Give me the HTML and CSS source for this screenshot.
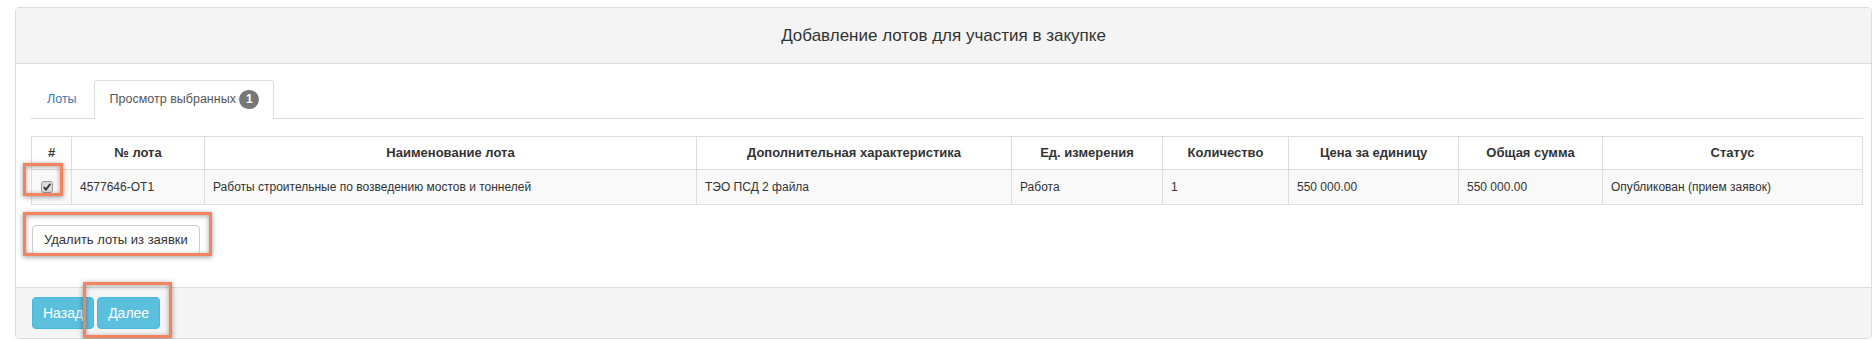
FILE: index.html
```html
<!DOCTYPE html>
<html>
<head>
  <meta charset="utf-8">
  <title>Добавление лотов</title>
  <link rel="stylesheet" href="styles.css">
</head>
<body>

<div class="page">

    <div class="panel">
        <div class="panel-heading">Добавление лотов для участия в закупке</div>

        <div class="panel-body">
            <ul class="tabs">
                <li><a href="#">Лоты</a></li>
                <li class="active"><a href="#">Просмотр выбранных <span class="badge">1</span></a></li>
            </ul>

            <div class="tab-content">
                <table class="lots">
                    <colgroup>
                        <col class="c-check">
                        <col class="c-num">
                        <col class="c-name">
                        <col class="c-extra">
                        <col class="c-unit">
                        <col class="c-qty">
                        <col class="c-price">
                        <col class="c-sum">
                        <col>
                    </colgroup>
                    <thead>
                        <tr>
                            <th>#</th>
                            <th>№ лота</th>
                            <th>Наименование лота</th>
                            <th>Дополнительная характеристика</th>
                            <th>Ед. измерения</th>
                            <th>Количество</th>
                            <th>Цена за единицу</th>
                            <th>Общая сумма</th>
                            <th>Статус</th>
                        </tr>
                    </thead>
                    <tbody>
                        <tr>
                            <td>
                                <svg class="check" width="12" height="12" viewBox="0 0 12 12">
                                    <rect x="0.5" y="0.5" width="11" height="11" rx="2" fill="#dcdcdc" stroke="#9a9a9a"/>
                                    <path d="M2.8 6.2 L4.9 8.6 L9.4 2.8" fill="none" stroke="#333" stroke-width="1.8"/>
                                </svg>
                            </td>
                            <td>4577646-ОТ1</td>
                            <td>Работы строительные по возведению мостов и тоннелей</td>
                            <td>ТЭО ПСД 2 файла</td>
                            <td>Работа</td>
                            <td>1</td>
                            <td>550 000.00</td>
                            <td>550 000.00</td>
                            <td>Опубликован (прием заявок)</td>
                        </tr>
                    </tbody>
                </table>

                <button class="btn btn-default btn-remove">Удалить лоты из заявки</button>
            </div>
        </div>

        <div class="panel-footer">
            <button class="btn btn-info">Назад</button><button class="btn btn-info">Далее</button>
        </div>
    </div>

    <!-- annotation frames -->
    <div class="mark mark-check"></div>
    <div class="mark mark-remove"></div>
    <div class="mark mark-next"></div>

</div>

</body>
</html>
```

FILE: styles.css
```css
body {
    margin: 0;
    background: #fff;
    color: #333;
    font-family: "Liberation Sans", Arial, sans-serif;
    font-size: 13px;
}

.page {
    position: relative;
    padding: 7px 1px 0 15px;
}

.panel {
    border: 1px solid #ddd;
    border-radius: 4px;
}

.panel-heading {
    height: 55px;
    line-height: 55px;
    background: #f4f4f4;
    border-bottom: 1px solid #ddd;
    border-radius: 3px 3px 0 0;
    text-align: center;
    font-size: 17px;
}

.panel-body {
    padding: 16px 8px 32px 15px;
}

.tabs {
    display: flex;
    margin: 0;
    padding: 0;
    list-style: none;
    border-bottom: 1px solid #ddd;
}

.tabs li {
    margin: 0 2px -1px 0;
}

.tabs a {
    display: block;
    padding: 9px 14px 9px 15px;
    line-height: 18px;
    font-size: 12.5px;
    color: #337ab7;
    text-decoration: none;
    border: 1px solid transparent;
    border-radius: 4px 4px 0 0;
}

.tabs .active a {
    color: #555;
    background: #fff;
    border-color: #ddd #ddd transparent;
}

.badge {
    display: inline-block;
    min-width: 8px;
    padding: 3px 6px;
    border-radius: 10px;
    background: #777;
    color: #fff;
    font-size: 12px;
    font-weight: bold;
    line-height: 13px;
    text-align: center;
    vertical-align: 0;
}

.tab-content {
    padding-top: 17px;
}

.lots {
    width: 1832px;
    table-layout: fixed;
    border-collapse: collapse;
    border: 1px solid #ddd;
}

.lots .c-check { width: 40px; }
.lots .c-num { width: 133px; }
.lots .c-name { width: 492px; }
.lots .c-extra { width: 315px; }
.lots .c-unit { width: 151px; }
.lots .c-qty { width: 126px; }
.lots .c-price { width: 170px; }
.lots .c-sum { width: 144px; }

.lots th,
.lots td {
    border: 1px solid #ddd;
    line-height: 18px;
    text-align: left;
    white-space: nowrap;
}

.lots th {
    padding: 7px 8px;
    text-align: center;
    font-weight: bold;
}

.lots td {
    padding: 8px;
    font-size: 12px;
    background: #f9f9f9;
}

.check {
    display: block;
    margin: 0 0 0 1px;
}

.btn {
    display: inline-block;
    border: 1px solid transparent;
    border-radius: 4px;
    font-family: inherit;
    font-size: 13px;
    line-height: 18px;
    cursor: pointer;
}

.btn-default {
    color: #333;
    background: #fff;
    border-color: #ccc;
}

.btn-remove {
    margin: 20px 0 0 1px;
    padding: 5px 11px;
}

.btn-info {
    margin-right: 3px;
    padding: 6px 10px;
    font-size: 14px;
    color: #fff;
    background: #5bc0de;
    border-color: #46b8da;
}

.panel-footer {
    padding: 9px 15px 9px 16px;
    background: #f5f5f5;
    border-top: 1px solid #ddd;
    border-radius: 0 0 3px 3px;
}

.mark {
    position: absolute;
    box-sizing: border-box;
    border: 3px solid #f4845f;
    box-shadow: 0 1px 5px rgba(0, 0, 0, 0.4), inset 0 1px 5px rgba(0, 0, 0, 0.35);
}

.mark-check {
    left: 23px;
    top: 163px;
    width: 40px;
    height: 33px;
}

.mark-remove {
    left: 23px;
    top: 212px;
    width: 189px;
    height: 44px;
}

.mark-next {
    left: 83px;
    top: 282px;
    width: 89px;
    height: 56px;
}
```
